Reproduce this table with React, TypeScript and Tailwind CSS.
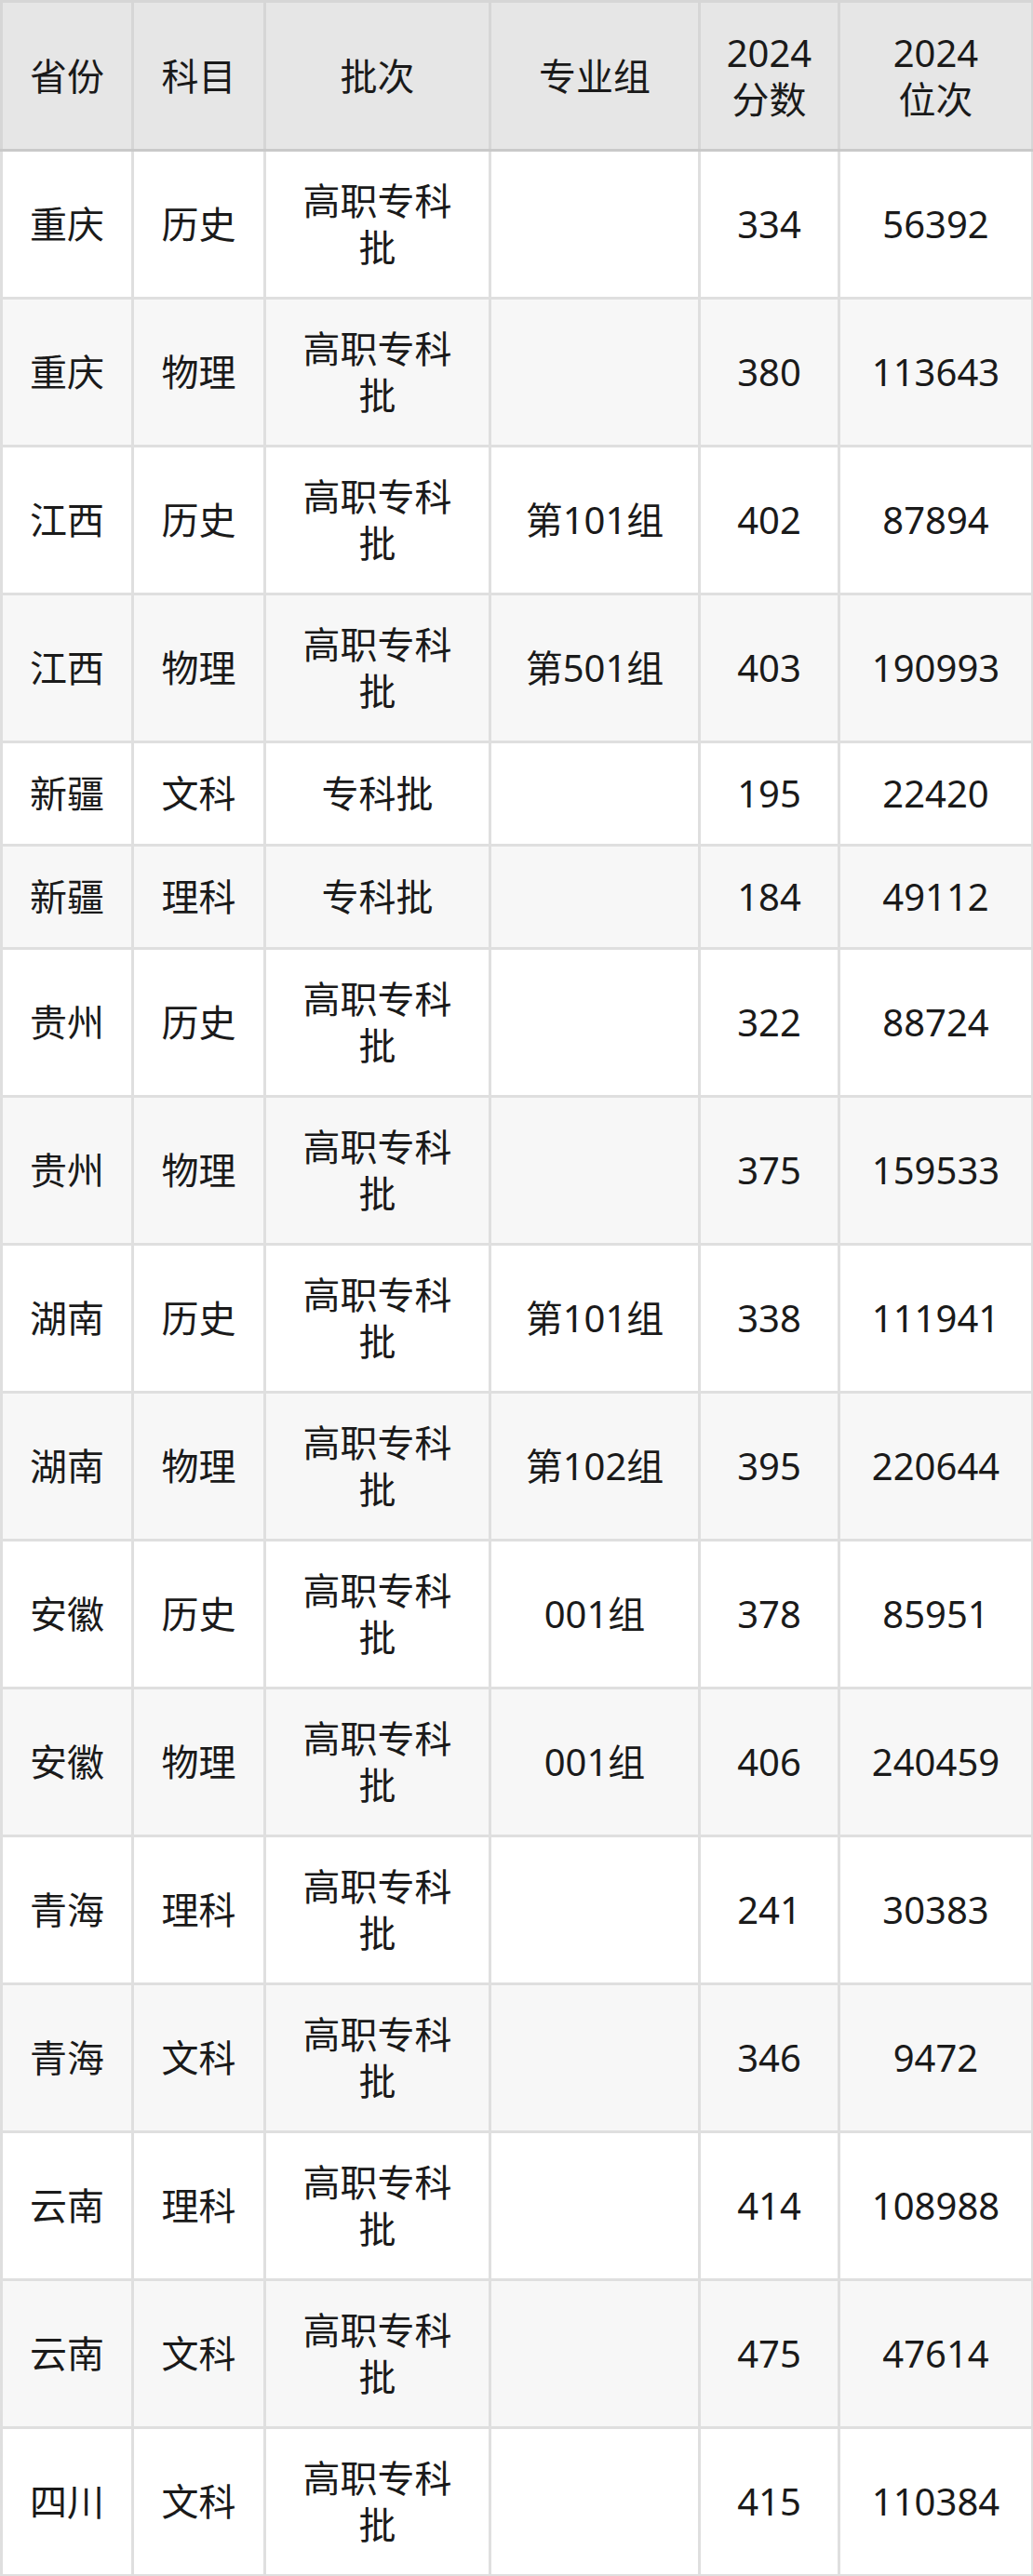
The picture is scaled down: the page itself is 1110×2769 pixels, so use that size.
import React from "react";

type Row = {
  p: string;
  s: string;
  b: string;
  g: string;
  score: string;
  rank: string;
};

const rows: Row[] = [
  { p: "重庆", s: "历史", b: "高职专科批", g: "", score: "334", rank: "56392" },
  { p: "重庆", s: "物理", b: "高职专科批", g: "", score: "380", rank: "113643" },
  { p: "江西", s: "历史", b: "高职专科批", g: "第101组", score: "402", rank: "87894" },
  { p: "江西", s: "物理", b: "高职专科批", g: "第501组", score: "403", rank: "190993" },
  { p: "新疆", s: "文科", b: "专科批", g: "", score: "195", rank: "22420" },
  { p: "新疆", s: "理科", b: "专科批", g: "", score: "184", rank: "49112" },
  { p: "贵州", s: "历史", b: "高职专科批", g: "", score: "322", rank: "88724" },
  { p: "贵州", s: "物理", b: "高职专科批", g: "", score: "375", rank: "159533" },
  { p: "湖南", s: "历史", b: "高职专科批", g: "第101组", score: "338", rank: "111941" },
  { p: "湖南", s: "物理", b: "高职专科批", g: "第102组", score: "395", rank: "220644" },
  { p: "安徽", s: "历史", b: "高职专科批", g: "001组", score: "378", rank: "85951" },
  { p: "安徽", s: "物理", b: "高职专科批", g: "001组", score: "406", rank: "240459" },
  { p: "青海", s: "理科", b: "高职专科批", g: "", score: "241", rank: "30383" },
  { p: "青海", s: "文科", b: "高职专科批", g: "", score: "346", rank: "9472" },
  { p: "云南", s: "理科", b: "高职专科批", g: "", score: "414", rank: "108988" },
  { p: "云南", s: "文科", b: "高职专科批", g: "", score: "475", rank: "47614" },
  { p: "四川", s: "文科", b: "高职专科批", g: "", score: "415", rank: "110384" },
];

const td = "border-[3px] border-[#dfdfdf] text-center align-middle p-0";
const th =
  "border-[3px] border-[#d6d6d6] border-b-[#c9c9c9] text-center align-middle p-0 font-normal";

export default function App() {
  return (
    <div
      className="w-[1110px] bg-white text-[#1a1a1a] text-[40px] leading-[50px]"
      style={{ fontFamily: '"Noto Sans", "Noto Sans CJK SC", sans-serif' }}
    >
      <table className="table-fixed border-collapse w-[1108px]">
        <colgroup>
          <col className="w-[141px]" />
          <col className="w-[142px]" />
          <col className="w-[242px]" />
          <col className="w-[225px]" />
          <col className="w-[150px]" />
          <col className="w-[208px]" />
        </colgroup>
        <thead>
          <tr className="h-[160px] bg-[#e6e6e6]">
            <th className={th}>省份</th>
            <th className={th}>科目</th>
            <th className={th}>批次</th>
            <th className={th}>专业组</th>
            <th className={th}>
              2024
              <br />
              分数
            </th>
            <th className={th}>
              2024
              <br />
              位次
            </th>
          </tr>
        </thead>
        <tbody>
          {rows.map((r, i) => {
            const two = r.b === "高职专科批";
            return (
              <tr
                key={i}
                className={`${two ? "h-[159px]" : "h-[111px]"} ${
                  i % 2 === 0 ? "bg-white" : "bg-[#f7f7f7]"
                }`}
              >
                <td className={td}>{r.p}</td>
                <td className={td}>{r.s}</td>
                <td className={td}>
                  {two ? (
                    <>
                      高职专科
                      <br />批
                    </>
                  ) : (
                    r.b
                  )}
                </td>
                <td className={td}>{r.g}</td>
                <td className={td}>{r.score}</td>
                <td className={td}>{r.rank}</td>
              </tr>
            );
          })}
        </tbody>
      </table>
    </div>
  );
}
